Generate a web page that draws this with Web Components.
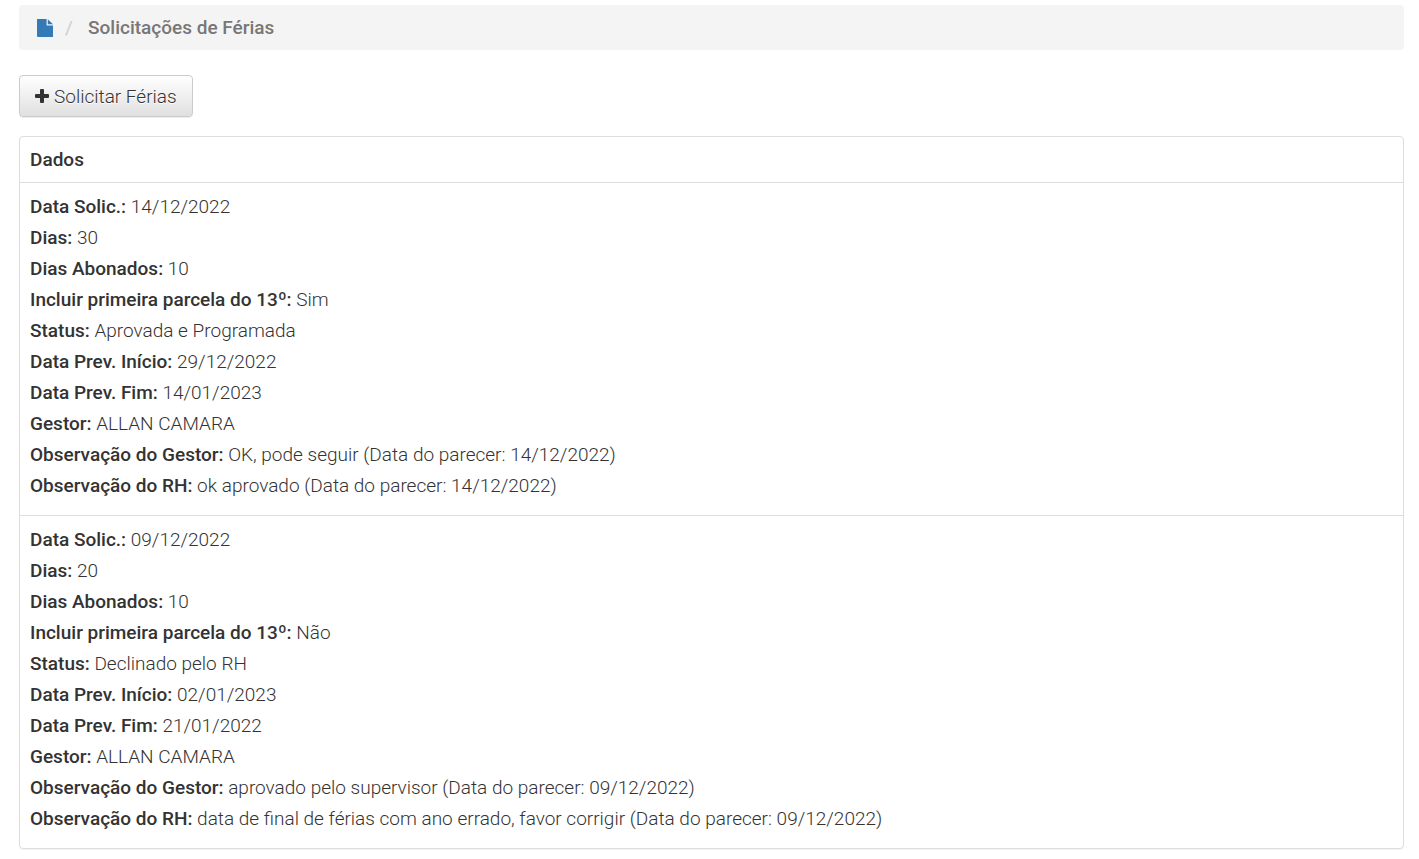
<!DOCTYPE html>
<html lang="pt-BR">
<head>
<meta charset="utf-8">
<title>Solicitações de Férias</title>
<style>
body { margin: 0; background: #fff; color: #333; font: 350 19px/31px Roboto, "Liberation Sans", sans-serif; }
</style>
</head>
<body>
<vacation-page></vacation-page>

<template id="page-template">
<style>
:host { display: block; padding: 5px 15px 8px 19px; }
action-button { margin: 25px 0 19px; }
</style>
<page-breadcrumb>Solicitações de Férias</page-breadcrumb>
<action-button>Solicitar Férias</action-button>
<request-panel></request-panel>
</template>

<template id="breadcrumb-template">
<style>
:host { display: block; }
ol { display: flex; align-items: center; margin: 0; padding: 7px 18px; list-style: none; background: #f4f4f4; border-radius: 4px; }
li { display: flex; align-items: center; }
a { display: flex; color: #337ab7; }
svg { display: block; fill: currentColor; }
.current { color: #777; font-weight: 500; }
.current::before { content: "/"; width: 23px; margin-left: 11px; color: #ccc; font-weight: 400; }
</style>
<nav aria-label="Navegação">
<ol>
<li><a href="#" aria-label="Início"><svg width="17" height="18" viewBox="0 0 17 18"><path d="M0 0H9.6V6.4H16V18H1Q0 18 0 17ZM10.8 0.2L16 5.2H10.8Z"/></svg></a></li>
<li class="current" aria-current="page"><slot></slot></li>
</ol>
</nav>
</template>

<template id="button-template">
<style>
:host { display: flex; }
button { display: flex; align-items: center; gap: 5px; height: 42px; padding: 0 15px; border: 1px solid #ccc; border-radius: 4px; background: linear-gradient(#fff, #e0e0e0); box-shadow: inset 0 1px 0 rgba(255,255,255,.15), 0 1px 1px rgba(0,0,0,.075); color: #333; font: inherit; text-shadow: 0 1px 0 #fff; cursor: pointer; }
svg { display: block; fill: currentColor; }
</style>
<button type="button"><svg width="14" height="14" viewBox="0 0 14 14" aria-hidden="true"><path d="M6 0H8Q9 0 9 1V5H13Q14 5 14 6V8Q14 9 13 9H9V13Q9 14 8 14H6Q5 14 5 13V9H1Q0 9 0 8V6Q0 5 1 5H5V1Q5 0 6 0Z"/></svg><span><slot></slot></span></button>
</template>

<template id="panel-template">
<style>
:host { display: block; border: 1px solid #ddd; border-radius: 4px; box-shadow: 0 1px 1px rgba(0,0,0,.05); }
table { width: 100%; border-collapse: collapse; }
th { padding: 7px 10px; text-align: left; font-weight: 500; }
td { padding: 8px 10px 14px; border-top: 1px solid #ddd; }
</style>
<table>
<thead><tr><th scope="col">Dados</th></tr></thead>
<tbody></tbody>
</table>
</template>

<template id="field-template">
<style>
:host { display: block; }
b { font-weight: 500; }
</style>
<b><slot name="label"></slot></b> <slot></slot>
</template>

<script>
const defineElement = (name, templateId, setup) => customElements.define(name, class extends HTMLElement {
  constructor() {
    super();
    this.attachShadow({ mode: "open" }).append(document.getElementById(templateId).content.cloneNode(true));
    if (setup) setup(this.shadowRoot);
  }
});

const labels = ["Data Solic.:", "Dias:", "Dias Abonados:", "Incluir primeira parcela do 13º:", "Status:", "Data Prev. Início:", "Data Prev. Fim:", "Gestor:", "Observação do Gestor:", "Observação do RH:"];
const requests = [
  ["14/12/2022", "30", "10", "Sim", "Aprovada e Programada", "29/12/2022", "14/01/2023", "ALLAN CAMARA", "OK, pode seguir (Data do parecer: 14/12/2022)", "ok aprovado (Data do parecer: 14/12/2022)"],
  ["09/12/2022", "20", "10", "Não", "Declinado pelo RH", "02/01/2023", "21/01/2022", "ALLAN CAMARA", "aprovado pelo supervisor (Data do parecer: 09/12/2022)", "data de final de férias com ano errado, favor corrigir (Data do parecer: 09/12/2022)"]
];

defineElement("request-field", "field-template");
defineElement("page-breadcrumb", "breadcrumb-template");
defineElement("action-button", "button-template");
defineElement("request-panel", "panel-template", root => {
  const body = root.querySelector("tbody");
  for (const request of requests) {
    const cell = body.insertRow().insertCell();
    request.forEach((value, i) => {
      const field = document.createElement("request-field");
      const label = document.createElement("span");
      label.slot = "label";
      label.textContent = labels[i];
      field.append(label, value);
      cell.append(field);
    });
  }
});
defineElement("vacation-page", "page-template");
</script>
</body>
</html>
